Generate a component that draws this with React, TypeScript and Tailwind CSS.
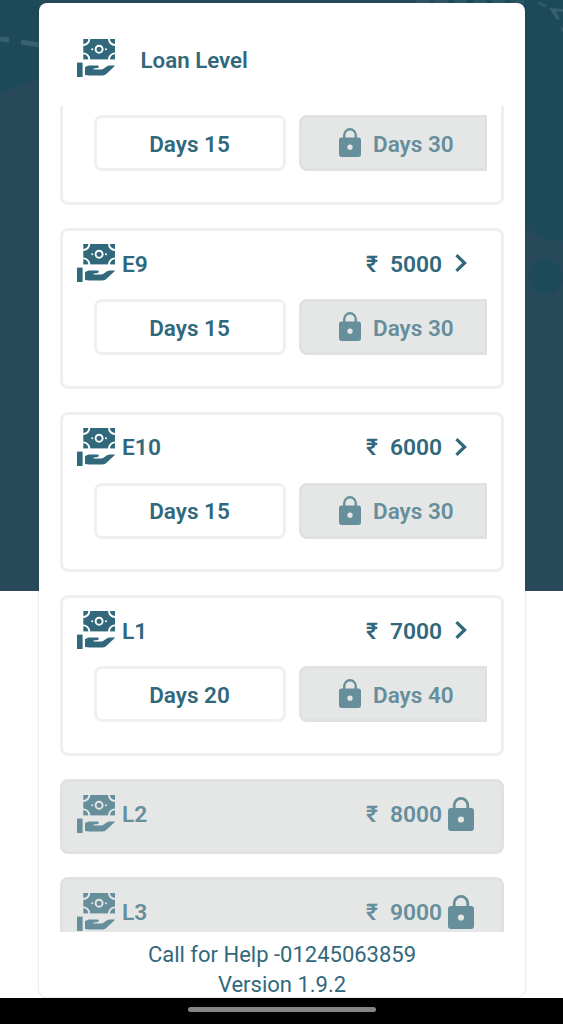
type Loan = {
  name: string
  amount: number
  short?: number
  long?: number
}

const loans: Loan[] = [
  { name: "E9", amount: 5000, short: 15, long: 30 },
  { name: "E10", amount: 6000, short: 15, long: 30 },
  { name: "L1", amount: 7000, short: 20, long: 40 },
  { name: "L2", amount: 8000 },
  { name: "L3", amount: 9000 },
]

function LoanIcon() {
  return (
    <svg viewBox="0 0 38 38" className="size-[38px] shrink-0" fill="currentColor">
      <mask id="note">
        <rect width="38" height="38" fill="white" />
        <g fill="none" stroke="black" strokeWidth="1.9">
          <circle cx="6.3" cy="0" r="6" />
          <circle cx="38" cy="0" r="6" />
          <circle cx="6.3" cy="20.4" r="6" />
          <circle cx="38" cy="20.4" r="6" />
          <circle cx="22.1" cy="10.2" r="3.5" />
        </g>
        <circle cx="15.2" cy="10.2" r="1" fill="black" />
        <circle cx="29" cy="10.2" r="1" fill="black" />
      </mask>
      <rect x="6.3" y="0" width="31.7" height="20.4" mask="url(#note)" />
      <rect x="0" y="23.6" width="5.6" height="14.4" />
      <path d="M8 28.2c1.6-1.2 3.2-1.7 5.2-1.7h7.3c1.6 0 1.8 2.1.2 2.4l-4.2.5v1.1h7.2c1.3 0 2.1-.3 3.1-1.1l3.3-2.1c1-.7 1.8-.9 3-.9H38c-.3.8-1 1.4-1.8 2l-6.4 6.2c-1.3 1.3-2.4 2-4.4 2h-13L8 35.9z" />
    </svg>
  )
}

function LockIcon({ className }: { className: string }) {
  return (
    <svg viewBox="0 0 26 34" className={className} fill="currentColor">
      <path
        fillRule="evenodd"
        d="M3 11h20a3 3 0 0 1 3 3v17a3 3 0 0 1-3 3H3a3 3 0 0 1-3-3V14a3 3 0 0 1 3-3zm10 8.4a3.1 3.1 0 1 0 0 6.2 3.1 3.1 0 0 0 0-6.2z"
      />
      <path d="M6.2 12V8.2a6.8 6.8 0 0 1 13.6 0V12" fill="none" stroke="currentColor" strokeWidth="2.8" />
    </svg>
  )
}

function Terms({ short, long }: { short: number; long: number }) {
  return (
    <div className="ml-[17px] flex gap-[13px] overflow-hidden text-[22.5px]">
      <div className="flex h-14 w-48 shrink-0 items-center justify-center rounded-lg border-[3px] border-[#f0f0f2] bg-white pt-px pr-px">
        Days {short}
      </div>
      <div className="flex h-14 w-[189px] shrink-0 items-center rounded-l-lg rounded-r-[2px] border-[3px] border-[#e0e2e2] bg-[#e5e7e7] pl-[37px] text-[#668e9b]">
        <LockIcon className="-mt-px h-[29px] w-[22px]" />
        <span className="mt-px ml-3">Days {long}</span>
      </div>
    </div>
  )
}

function LoanCard({ loan }: { loan: Loan }) {
  const locked = !loan.short || !loan.long
  return (
    <div
      className={
        locked
          ? "h-[75px] shrink-0 rounded-lg border-[3px] border-[#e0e2e2] bg-[#e5e7e7] pt-[13px] pr-[13px] pl-[14px] text-[#668e9b]"
          : "h-[160.5px] shrink-0 rounded-lg border-[3px] border-[#f0f0f3] bg-white pt-[13px] pr-[14px] pl-[14px]"
      }
    >
      <div className="flex h-[38px] items-center">
        <LoanIcon />
        <span className="mt-[3px] ml-[7px]">{loan.name}</span>
        <span className="mt-[3px] ml-auto w-3.5">₹</span>
        <span className="mt-[3px] ml-[10px] w-[52px]">{loan.amount}</span>
        {locked ? (
          <LockIcon className="mr-[14px] ml-[6px] h-[34px] w-[26px]" />
        ) : (
          <svg viewBox="0 0 12 18" className="mr-[20px] ml-[13px] h-[18px] w-3" fill="none">
            <path d="M1.4 1.2 9.6 9l-8.2 7.8" stroke="currentColor" strokeWidth="3.2" />
          </svg>
        )}
      </div>
      {loan.short && loan.long && (
        <div className="mt-[17px]">
          <Terms short={loan.short} long={loan.long} />
        </div>
      )}
    </div>
  )
}

// Dark header artwork behind the sheet
function Backdrop() {
  return (
    <svg viewBox="0 0 563 591" className="absolute top-0 left-0 h-[591px] w-[563px]">
      <rect width="563" height="591" fill="#28495a" />
      <path d="M0 0h563v241c-16 0-29-7-40-19L300 60 39 79 0 92z" fill="#1c4a59" />
      <rect x="39" width="400" height="8" fill="#28495a" />
      <circle cx="546" cy="277" r="17" fill="#1c4a59" />
      <path d="m0 39 9 1M21 42l19 3" stroke="#38606e" strokeWidth="5" />
      <path d="M416 2h110M538 3l8 3" stroke="#2f5968" strokeWidth="3" strokeDasharray="13 6" />
      <path d="m549 8 14 1v3l-7-1 4 8-3 1zM560 27l3 1v4z" fill="#365f6d" />
    </svg>
  )
}

export default function LoanLevel() {
  return (
    <div className="relative flex h-[1024px] w-[563px] flex-col overflow-hidden bg-white font-['Roboto',sans-serif] text-[#31687c]">
      <Backdrop />

      {/* Sheet */}
      <div className="relative mt-[3px] ml-[39px] flex h-[994px] w-[486px] flex-col rounded-lg bg-white px-[21px] shadow-[0_0_2px_rgba(0,0,0,0.25)]">
        <header className="flex h-[103px] shrink-0 items-start pt-9 pl-[17px]">
          <LoanIcon />
          <h1 className="mt-[5px] ml-[25.5px] text-[22.3px] leading-8 font-semibold">Loan Level</h1>
        </header>

        <div className="flex h-[826px] shrink-0 flex-col gap-[23px] overflow-hidden text-[22.8px] leading-8 font-semibold">
          {/* Card scrolled halfway under the header */}
          <div className="h-[99px] shrink-0 rounded-b-lg border-[3px] border-t-0 border-[#f0f0f3] pt-[9px] pr-[14px] pl-[14px]">
            <Terms short={15} long={30} />
          </div>
          {loans.map((loan) => (
            <LoanCard key={loan.name} loan={loan} />
          ))}
        </div>

        <footer className="pt-2 text-center text-[22px] leading-[30px]">
          <p>Call for Help -01245063859</p>
          <p>Version 1.9.2</p>
        </footer>
      </div>

      {/* Gesture bar */}
      <div className="relative mt-px flex h-[26px] justify-center bg-black pt-[9px]">
        <div className="h-[5px] w-[188px] rounded-full bg-[#858585]" />
      </div>
    </div>
  )
}
